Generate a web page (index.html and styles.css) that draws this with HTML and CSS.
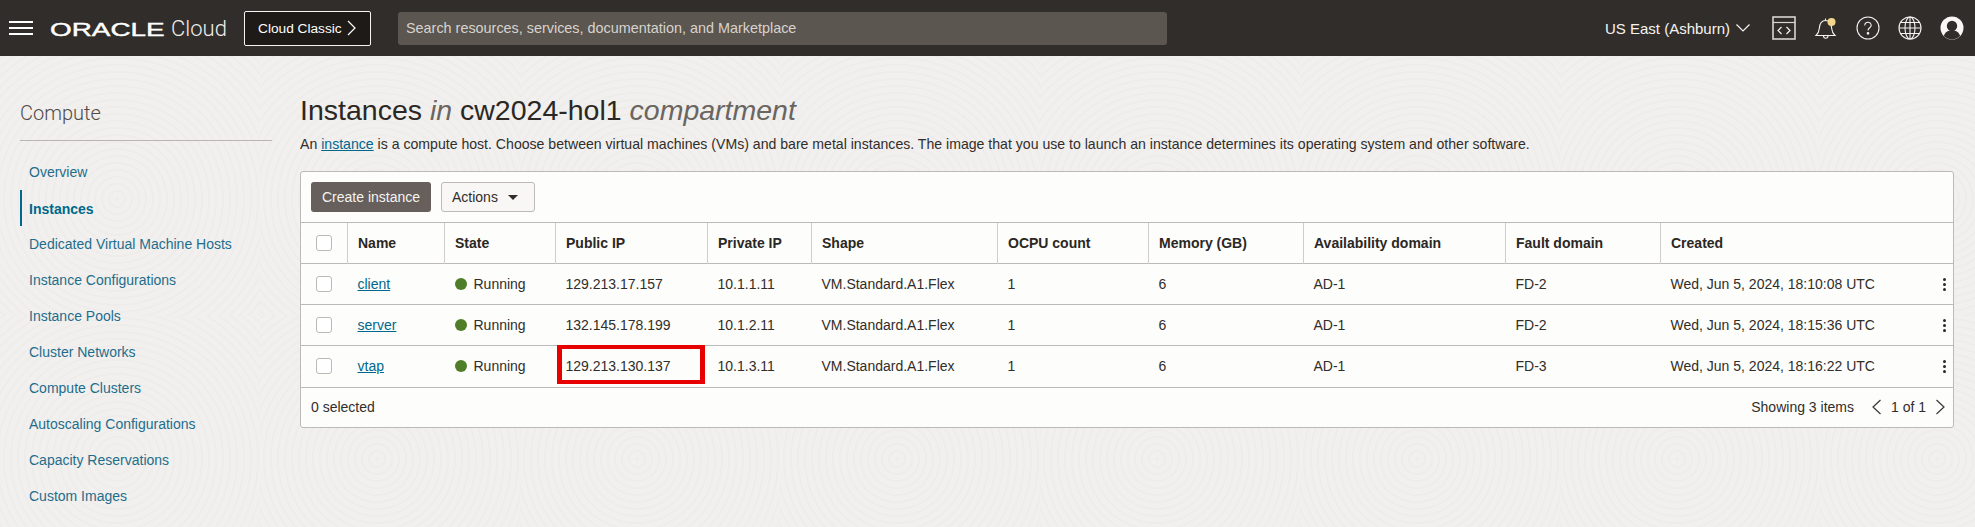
FILE: index.html
```html
<!DOCTYPE html>
<html lang="en">
<head>
    <meta charset="UTF-8">
    <meta name="viewport" content="width=device-width, initial-scale=1.0">
    <title>Instances</title>
    <link rel="stylesheet" href="styles.css">
</head>
<body>
    <header class="topbar">
        <button class="menu-btn" aria-label="Menu"><span></span><span></span><span></span></button>
        <div class="logo"><span class="logo-oracle">ORACLE</span><span class="logo-cloud">Cloud</span></div>
        <button class="classic-btn">Cloud Classic
            <svg width="9" height="16" viewBox="0 0 9 16"><path d="M1 1l7 7-7 7" fill="none" stroke="#fff" stroke-width="1.2"/></svg>
        </button>
        <div class="search">Search resources, services, documentation, and Marketplace</div>
        <div class="region">US East (Ashburn)
            <svg width="14" height="8" viewBox="0 0 14 8"><path d="M.5.5l6.5 6.5 6.5-6.5" fill="none" stroke="#f5f4f2" stroke-width="1.2"/></svg>
        </div>
        <div class="top-icons">
            <svg width="24" height="24" viewBox="0 0 24 24" fill="none" stroke="#d8d5d1" stroke-width="1.6"><rect x="1" y="1" width="22" height="22"/><path d="M1 6.5h22" stroke-width="1.2"/><path d="M9.5 11l-3.5 3.5 3.5 3.5M14.5 11l3.5 3.5-3.5 3.5" stroke="#f5f4f2" stroke-width="1.2"/></svg>
            <svg width="24" height="24" viewBox="0 0 24 24" fill="none" stroke="#f5f4f2" stroke-width="1.1"><path d="M2 19.5c2.2-2 3-3.6 3.3-7 .3-4.4 2.3-8 6.2-8s5.9 3.6 6.2 8c.3 3.4 1.1 5 3.3 7z"/><path d="M9.5 19.8c0 3.2 4.5 3.2 4.5 0"/><path d="M11.5 4.5V2.5"/><circle cx="17.5" cy="6" r="4" fill="#f3d68b" stroke="none"/></svg>
            <svg width="24" height="24" viewBox="0 0 24 24" fill="none" stroke="#f5f4f2" stroke-width="1.1"><circle cx="12" cy="12" r="11"/><path d="M8.8 9.5c0-4.2 6.4-4.2 6.4-.2 0 2.5-3.200 2.500-3.200 5.200"/><circle cx="12" cy="17.300" r=".8" fill="#f5f4f2"/></svg>
            <svg width="24" height="24" viewBox="0 0 24 24" fill="none" stroke="#f5f4f2" stroke-width="1.1"><circle cx="12" cy="12" r="11"/><ellipse cx="12" cy="12" rx="5" ry="11"/><path d="M12 1v22M1 12h22M2.5 6.5h19M2.5 17.5h19"/></svg>
            <svg width="24" height="24" viewBox="0 0 24 24"><circle cx="12" cy="12" r="11.5" fill="#f8f7f6"/><circle cx="12" cy="10" r="5.2" fill="#312d2a"/><path d="M3.8 20c1.5-4.5 4.5-5.500 8.200-5.500s6.700 1 8.200 5.500c-4.500 4.500-11.900 4.500-16.400 0z" fill="#312d2a"/></svg>
        </div>
    </header>

    <div class="page">
        <aside class="sidebar">
            <h2 class="side-title">Compute</h2>
            <ul class="side-nav">
                <li><a href="#">Overview</a></li>
                <li class="active"><a href="#">Instances</a></li>
                <li><a href="#">Dedicated Virtual Machine Hosts</a></li>
                <li><a href="#">Instance Configurations</a></li>
                <li><a href="#">Instance Pools</a></li>
                <li><a href="#">Cluster Networks</a></li>
                <li><a href="#">Compute Clusters</a></li>
                <li><a href="#">Autoscaling Configurations</a></li>
                <li><a href="#">Capacity Reservations</a></li>
                <li><a href="#">Custom Images</a></li>
            </ul>
        </aside>

        <main class="content">
            <h1 class="page-title">Instances <em>in</em> cw2024-hol1 <em>compartment</em></h1>
            <p class="page-desc">An <a href="#">instance</a> is a compute host. Choose between virtual machines (VMs) and bare metal instances. The image that you use to launch an instance determines its operating system and other software.</p>

            <section class="card">
                <div class="toolbar">
                    <button class="btn-primary">Create instance</button>
                    <button class="btn-actions">Actions <span class="caret"></span></button>
                </div>
                <table class="grid">
                    <colgroup>
                        <col class="c-check"><col class="c-name"><col class="c-state"><col class="c-public"><col class="c-private">
                        <col class="c-shape"><col class="c-ocpu"><col class="c-mem"><col class="c-ad"><col class="c-fd"><col>
                    </colgroup>
                    <thead>
                        <tr>
                            <th><span class="check"></span></th>
                            <th>Name</th><th>State</th><th>Public IP</th><th>Private IP</th><th>Shape</th>
                            <th>OCPU count</th><th>Memory (GB)</th><th>Availability domain</th><th>Fault domain</th><th>Created</th>
                        </tr>
                    </thead>
                    <tbody>
                        <tr>
                            <td><span class="check"></span></td>
                            <td><a href="#">client</a></td>
                            <td><span class="dot"></span>Running</td>
                            <td>129.213.17.157</td>
                            <td>10.1.1.11</td>
                            <td>VM.Standard.A1.Flex</td>
                            <td>1</td><td>6</td><td>AD-1</td><td>FD-2</td>
                            <td><div class="created">Wed, Jun 5, 2024, 18:10:08 UTC<span class="kebab"><i></i><i></i><i></i></span></div></td>
                        </tr>
                        <tr>
                            <td><span class="check"></span></td>
                            <td><a href="#">server</a></td>
                            <td><span class="dot"></span>Running</td>
                            <td>132.145.178.199</td>
                            <td>10.1.2.11</td>
                            <td>VM.Standard.A1.Flex</td>
                            <td>1</td><td>6</td><td>AD-1</td><td>FD-2</td>
                            <td><div class="created">Wed, Jun 5, 2024, 18:15:36 UTC<span class="kebab"><i></i><i></i><i></i></span></div></td>
                        </tr>
                        <tr>
                            <td><span class="check"></span></td>
                            <td><a href="#">vtap</a></td>
                            <td><span class="dot"></span>Running</td>
                            <td class="marked">129.213.130.137<span class="red-box"></span></td>
                            <td>10.1.3.11</td>
                            <td>VM.Standard.A1.Flex</td>
                            <td>1</td><td>6</td><td>AD-1</td><td>FD-3</td>
                            <td><div class="created">Wed, Jun 5, 2024, 18:16:22 UTC<span class="kebab"><i></i><i></i><i></i></span></div></td>
                        </tr>
                    </tbody>
                </table>
                <div class="card-foot">
                    <span>0 selected</span>
                    <div class="pager">
                        <span class="showing">Showing 3 items</span>
                        <svg width="11" height="16" viewBox="0 0 11 16"><path d="M9.5 1L2 8l7.5 7" fill="none" stroke="#3a3632" stroke-width="1.2"/></svg>
                        <span>1 of 1</span>
                        <svg width="11" height="16" viewBox="0 0 11 16"><path d="M1.5 1L9 8l-7.5 7" fill="none" stroke="#3a3632" stroke-width="1.2"/></svg>
                    </div>
                </div>
            </section>
        </main>
    </div>
</body>
</html>
```

FILE: styles.css
```css
* {
    box-sizing: border-box;
}
html, body {
    height: 100%;
}
body {
    margin: 0;
    overflow: hidden;
    font-family: "Liberation Sans", Arial, sans-serif;
    font-size: 14px;
    color: #312d2a;
    background-color: #f1f0ee;
}
button {
    font-family: inherit;
    cursor: pointer;
}

/* top bar */
.topbar {
    display: flex;
    align-items: center;
    height: 56px;
    background-color: #312d2a;
    color: #fff;
}
.menu-btn {
    display: flex;
    flex-direction: column;
    justify-content: space-between;
    width: 24px;
    height: 14px;
    margin-left: 9px;
    padding: 0;
    background: none;
    border: none;
}
.menu-btn span {
    display: block;
    height: 2px;
    background-color: #fff;
}
.logo {
    display: flex;
    align-items: baseline;
    width: 194px;
    margin-left: 17px;
}
.logo-oracle {
    display: inline-block;
    width: 121px;
    font-size: 18px;
    -webkit-text-stroke: .4px #fff;
    transform: scaleX(1.55);
    transform-origin: left;
}
.logo-cloud {
    font-family: Roboto, sans-serif;
    font-size: 22px;
    font-weight: 300;
    color: #f0eeec;
}
.classic-btn {
    display: flex;
    align-items: center;
    gap: 5px;
    width: 127px;
    height: 35px;
    padding: 0 0 0 13px;
    font-size: 13.7px;
    color: #fff;
    background-color: #1e1a17;
    border: 1px solid #f5f4f2;
    border-radius: 2px;
}
.search {
    width: 769px;
    height: 33px;
    margin-left: 27px;
    padding-left: 8px;
    line-height: 33px;
    font-size: 14.4px;
    color: #d6d3cf;
    background-color: #5c5650;
    border-radius: 3px;
}
.region {
    display: flex;
    align-items: center;
    gap: 6px;
    margin-left: auto;
    font-size: 15px;
    color: #f5f4f2;
}
.top-icons {
    display: flex;
    align-items: center;
    gap: 18px;
    margin-left: 22px;
    margin-right: 11px;
}

/* page */
.page {
    display: flex;
    height: calc(100% - 56px);
    background-image: repeating-radial-gradient(circle at 45% 55%, rgba(120,110,100,.025) 0 2px, transparent 2px 7px);
    background-size: 260px 260px;
}
.sidebar {
    flex: none;
    width: 300px;
    padding-left: 20px;
}
.side-title {
    width: 252px;
    height: 85px;
    margin: 0;
    padding-top: 45px;
    font-family: Roboto, sans-serif;
    font-size: 20px;
    font-weight: 300;
    color: #4f4a46;
    border-bottom: 1px solid #b9b5b0;
}
.side-nav {
    margin: 13px 0 0;
    padding: 0;
    list-style: none;
}
.side-nav li {
    height: 36px;
    padding-left: 9px;
    line-height: 36px;
    font-size: 14px;
}
.side-nav a {
    color: #1f6d8c;
    text-decoration: none;
}
.side-nav .active {
    border-left: 2px solid #00688c;
    padding-left: 7px;
    line-height: 38px;
    font-weight: bold;
}
.side-nav .active a {
    color: #00688c;
}

.content {
    flex: 1;
    min-width: 0;
    padding-right: 21px;
}
.page-title {
    margin: 37px 0 0;
    font-size: 28.5px;
    line-height: 34px;
    font-weight: normal;
    color: #2b2724;
}
.page-title em {
    color: #6b6560;
}
.page-desc {
    margin: 8px 0 0;
    font-size: 14.1px;
    line-height: 18px;
}
.page-desc a {
    color: #00688c;
}

/* table card */
.card {
    margin-top: 18px;
    background-color: #fdfdfb;
    border: 1px solid #bdb9b4;
    border-radius: 3px;
}
.toolbar {
    display: flex;
    gap: 10px;
    height: 50px;
    padding: 10px;
}
.btn-primary {
    width: 120px;
    height: 30px;
    padding: 0;
    font-size: 14px;
    color: #f5f4f2;
    background-color: #665f5b;
    border: none;
    border-radius: 3px;
}
.btn-actions {
    display: flex;
    align-items: center;
    gap: 10px;
    width: 94px;
    height: 30px;
    padding: 0 0 0 10px;
    font-size: 14px;
    color: #312d2a;
    background-color: #f8f7f5;
    border: 1px solid #bdb9b4;
    border-radius: 3px;
}
.caret {
    width: 0;
    height: 0;
    border-left: 5px solid transparent;
    border-right: 5px solid transparent;
    border-top: 5px solid #312d2a;
}
.grid {
    width: 100%;
    table-layout: fixed;
    border-collapse: collapse;
}
.c-check { width: 46px; }
.c-name { width: 97px; }
.c-state { width: 111px; }
.c-public { width: 152px; }
.c-private { width: 104px; }
.c-shape { width: 186px; }
.c-ocpu { width: 151px; }
.c-mem { width: 155px; }
.c-ad { width: 202px; }
.c-fd { width: 155px; }
.grid th, .grid td {
    height: 41px;
    padding: 0 0 0 10.5px;
    text-align: left;
    white-space: nowrap;
    border-top: 1px solid #bdb9b4;
}
.grid th {
    font-weight: bold;
    color: #2b2724;
    border-left: 1px solid #d0cdc9;
}
.grid th:first-child {
    border-left: none;
}
.grid td a {
    color: #00688c;
}
.grid tr > :first-child {
    padding: 0 0 0 15px;
}
.check {
    display: block;
    width: 16px;
    height: 16px;
    background-color: #fff;
    border: 1px solid #bdb9b4;
    border-radius: 3px;
}
.dot {
    display: inline-block;
    width: 12px;
    height: 12px;
    margin-right: 7px;
    vertical-align: -1px;
    background-color: #4f7d28;
    border-radius: 50%;
}
.marked {
    position: relative;
}
.red-box {
    position: absolute;
    top: -1px;
    left: 2px;
    right: 2px;
    bottom: 3px;
    border: solid #e60000;
    border-width: 4px 5px;
}
.created {
    display: flex;
    align-items: center;
    justify-content: space-between;
    padding-right: 7px;
}
.kebab {
    display: flex;
    flex-direction: column;
    gap: 2px;
}
.kebab i {
    display: block;
    width: 3px;
    height: 3px;
    background-color: #2b2724;
    border-radius: 50%;
}
.card-foot {
    display: flex;
    align-items: center;
    justify-content: space-between;
    height: 40px;
    padding: 0 7px 0 10px;
    border-top: 1px solid #bdb9b4;
}
.pager {
    display: flex;
    align-items: center;
    gap: 9px;
}
.showing {
    margin-right: 8px;
}
```
